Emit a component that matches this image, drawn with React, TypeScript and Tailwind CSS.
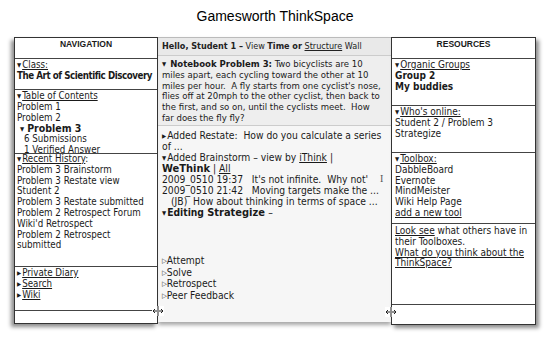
const font = "font-['DejaVu_Sans_Condensed','Liberation_Sans',sans-serif]";

const Down = () => <span className="inline-block text-[6px] leading-[6px] align-[1px] mr-[1px]">▼</span>;
const Right = () => <span className="inline-block text-[6px] leading-[6px] align-[1px] mr-[1px]">▶</span>;
const Hollow = () => <span className="inline-block text-[7px] leading-[7px] align-[1px]">▷</span>;

const Handle = () => (
  <svg width="12" height="10" viewBox="0 0 12 10" className="absolute">
    <rect x="0" y="0" width="12" height="10" fill="white" />
    <line x1="6" y1="0" x2="6" y2="10" stroke="#222" strokeWidth="1" />
    <path d="M1 5 L5 5 M1 5 L3 3 M1 5 L3 7" stroke="#222" strokeWidth="1" fill="none" />
    <path d="M7 5 L11 5 M11 5 L9 3 M11 5 L9 7" stroke="#222" strokeWidth="1" fill="none" />
  </svg>
);

const NavPanel = () => (
  <div className="w-[144px] h-[287px] flex flex-col border border-[#333] bg-white shadow-[-3px_3px_4px_rgba(0,0,0,0.45)] z-10 relative text-[9.7px]">
    <div className="h-[21px] border-b border-[#444] text-center font-bold text-[8.5px] font-['Liberation_Sans',sans-serif] pt-[1px]">
      NAVIGATION
    </div>
    <div className="h-[31px] border-b border-[#444] px-[2px] pt-[1px]">
      <div><Down /><span className="underline">Class:</span></div>
      <div className="font-bold tracking-[-0.45px] whitespace-nowrap">The Art of Scientific Discovery</div>
    </div>
    <div className="h-[64px] border-b border-[#444] px-[2px] pt-[1px]">
      <div><Down /><span className="underline">Table of Contents</span></div>
      <div>Problem 1</div>
      <div>Problem 2</div>
      <div className="font-bold text-[10.5px] leading-[11px]"><span className="text-[6px] align-[1px] mr-[3px] ml-[3px]">▼</span>Problem 3</div>
      <div className="pl-[7px]">6 Submissions</div>
      <div className="pl-[7px]">1 Verified Answer</div>
    </div>
    <div className="h-[113px] border-b border-[#444] px-[2px]">
      <div><Down /><span className="underline">Recent History</span>:</div>
      <div>Problem 3 Brainstorm</div>
      <div>Problem 3 Restate view</div>
      <div>Student 2</div>
      <div>Problem 3 Restate submitted</div>
      <div>Problem 2 Retrospect Forum</div>
      <div>Wiki'd Retrospect</div>
      <div>Problem 2 Retrospect</div>
      <div>submitted</div>
    </div>
    <div className="h-[44px] border-b border-[#444] px-[2px] pt-[1px]">
      <div><Right /><span className="underline">Private Diary</span></div>
      <div><Right /><span className="underline">Search</span></div>
      <div><Right /><span className="underline">Wiki</span></div>
    </div>
    <div className="flex-1 relative">
      <div className="absolute right-[-7px] top-[-5px] w-[12px] h-[10px]"><Handle /></div>
    </div>
  </div>
);

const MiddlePanel = () => (
  <div className="flex-1 h-[285px] flex flex-col bg-[#f3f3f3] border-t border-[#bbb] shadow-[0_3px_4px_rgba(0,0,0,0.35)] relative">
    <div className="h-[18px] bg-[#e9e9e9] border-b border-[#ccc] px-[4px] pt-[3px] text-[#222] text-[9px] whitespace-nowrap">
      <b>Hello, Student 1 –</b> View <b>Time or</b> <span className="underline">Structure</span> Wall
    </div>
    <div className="h-[70px] bg-[#eeeeee] border-b border-[#ccc] pl-[4px] pr-[6px] pt-[3px] text-[9.5px]">
      <b><Down /> Notebook Problem 3:</b> Two bicyclists are 10 miles apart, each cycling toward the other at 10 miles per hour.&nbsp; A fly starts from one cyclist's nose, flies off at 20mph to the other cyclist, then back to the first, and so on, until the cyclists meet.&nbsp; How<br />far does the fly fly?
    </div>
    <div className="flex-1 px-[4px] pt-[4px] bg-[#f6f6f6] relative text-[10.25px] leading-[11px]">
      <div><Right />Added Restate:&nbsp; How do you calculate a series of ...</div>
      <div><Down />Added Brainstorm – view by <span className="underline">iThink</span> |</div>
      <div><b className="text-[11px]">WeThink</b> | <span className="underline">All</span></div>
      <div className="whitespace-nowrap">2009_0510 19:37&nbsp;&nbsp; It's not infinite.&nbsp; Why not'</div>
      <div className="whitespace-nowrap">2009_0510 21:42&nbsp;&nbsp; Moving targets make the ...</div>
      <div className="whitespace-nowrap pl-[9px]">(JB)&nbsp; How about thinking in terms of space ...</div>
      <div className="font-bold"><Down />Editing <span className="text-[11px]">Strategize</span> <span className="font-normal">–</span></div>
      <div className="h-[37px]" />
      <div className="leading-[11.5px]"><Hollow />Attempt</div>
      <div className="leading-[11.5px]"><Hollow />Solve</div>
      <div className="leading-[11.5px]"><Hollow />Retrospect</div>
      <div className="leading-[11.5px]"><Hollow />Peer Feedback</div>
      <span className="absolute left-[222px] top-[48px] text-[10px] leading-[10px] text-[#555] font-['Liberation_Serif',serif]">I</span>
    </div>
  </div>
);

const ResourcePanel = () => (
  <div className="w-[145px] h-[288px] flex flex-col border border-[#333] bg-white shadow-[3px_3px_4px_rgba(0,0,0,0.45)] z-10 relative text-[10px]">
    <div className="h-[21px] border-b border-[#444] text-center font-bold text-[8.5px] font-['Liberation_Sans',sans-serif] pt-[1px]">
      RESOURCES
    </div>
    <div className="h-[47px] border-b border-[#444] px-[3px] pt-[1px]">
      <div><Down /><span className="underline">Organic Groups</span></div>
      <div className="font-bold">Group 2</div>
      <div className="font-bold">My buddies</div>
    </div>
    <div className="h-[47px] border-b border-[#444] px-[3px] pt-[1px]">
      <div><Down /><span className="underline">Who's online:</span></div>
      <div>Student 2 / Problem 3</div>
      <div>Strategize</div>
    </div>
    <div className="h-[71px] border-b border-[#444] px-[3px] pt-[1px]">
      <div><Down /><span className="underline">Toolbox:</span></div>
      <div>DabbleBoard</div>
      <div>Evernote</div>
      <div>MindMeister</div>
      <div>Wiki Help Page</div>
      <div className="underline">add a new tool</div>
    </div>
    <div className="h-[81px] border-b border-[#444] px-[3px] pt-[2px]">
      <div><span className="underline">Look see</span> what others have in their Toolboxes.</div>
      <div className="underline">What do you think about the ThinkSpace?</div>
    </div>
    <div className="flex-1 relative">
      <div className="absolute left-[-7px] top-[2px] w-[12px] h-[10px]"><Handle /></div>
    </div>
  </div>
);

export default function App() {
  return (
    <div className={`w-[550px] h-[342px] bg-white text-[#1a1a1a] leading-[10.8px] ${font}`}>
      <div className="h-[37px] pt-[8px] text-center text-[14px] leading-[16px] font-['Liberation_Sans',sans-serif] text-black">
        Gamesworth ThinkSpace
      </div>
      <div className="flex ml-[14px] w-[522px] items-start">
        <NavPanel />
        <MiddlePanel />
        <ResourcePanel />
      </div>
    </div>
  );
}
